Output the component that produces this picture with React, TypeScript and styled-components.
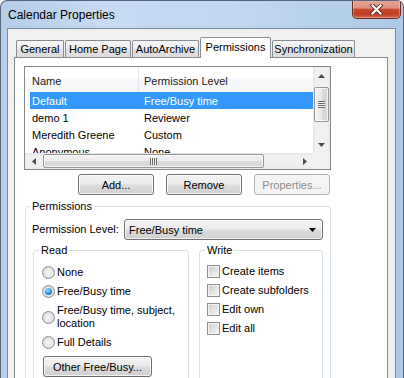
import React from 'react';
import styled, { createGlobalStyle } from 'styled-components';

const Global = createGlobalStyle`
  html, body { margin: 0; padding: 0; background: #ffffff; }
  body {
    font-family: "Liberation Sans", Arial, sans-serif;
    font-size: 11px;
    color: #000;
  }
  #root { width: 404px; height: 378px; overflow: hidden; }
  * { box-sizing: border-box; }
`;

const Window = styled.div`
  width: 404px;
  height: 378px;
  border: 1px solid #56677c;
  border-bottom: none;
  border-radius: 7px 7px 0 0;
  background: linear-gradient(90deg, #b4cde9 0%, #c6dbf1 25%, #c0d7ef 60%, #adc9e8 100%);
  display: flex;
  flex-direction: column;
  overflow: hidden;
`;

const TitleBar = styled.div`
  height: 27px;
  flex: none;
  display: flex;
  align-items: flex-start;
`;

const Title = styled.div`
  font-size: 12px;
  line-height: 14px;
  padding: 7px 0 0 7px;
  color: #000;
`;

const CloseButton = styled.div`
  width: 49px;
  height: 19px;
  margin: -1px 2px 0 auto;
  border: 1px solid #6e2a1f;
  border-top: none;
  border-radius: 0 0 5px 5px;
  background: linear-gradient(#eaa99b 0%, #dd8e7f 45%, #c8492f 52%, #c13c24 78%, #d56a4f 100%);
  box-shadow: inset 0 0 0 1px rgba(255, 255, 255, 0.3);
  display: flex;
  align-items: center;
  justify-content: center;
`;

const Body = styled.div`
  flex: 1;
  display: flex;
  flex-direction: column;
  margin: 0 7px 0 6px;
  border: 1px solid #7a8ca3;
  border-bottom: none;
  background: #f0f0f0;
  padding: 8px 7px 0 6px;
  min-height: 0;
`;

const TabStrip = styled.div`
  height: 20px;
  flex: none;
  display: flex;
  align-items: flex-end;
  gap: 1px;
  padding-left: 2px;
`;

const Tab = styled.div<{ $w: number; $active?: boolean }>`
  width: ${(p) => p.$w}px;
  height: ${(p) => (p.$active ? 21 : 17)}px;
  margin-bottom: ${(p) => (p.$active ? -1 : 0)}px;
  padding-bottom: ${(p) => (p.$active ? 2 : 0)}px;
  position: relative;
  z-index: ${(p) => (p.$active ? 2 : 1)};
  border: 1px solid #898c95;
  border-bottom: none;
  border-radius: 2px 2px 0 0;
  background: ${(p) =>
    p.$active ? '#ffffff' : 'linear-gradient(#f6f6f6 0%, #ececec 50%, #e2e2e2 51%, #dcdcdc 100%)'};
  display: flex;
  align-items: center;
  justify-content: center;
  white-space: nowrap;
  font-size: 11px;
`;

const Panel = styled.div`
  flex: 1;
  border: 1px solid #898c95;
  border-bottom: none;
  background: #ffffff;
  padding: 8px 56px 0 9px;
  display: flex;
  flex-direction: column;
  overflow: hidden;
  min-height: 0;
`;

const ListView = styled.div`
  width: 307px;
  height: 104px;
  flex: none;
  border: 1px solid #828790;
  background: #fff;
  display: grid;
  grid-template-columns: 1fr 17px;
  grid-template-rows: 1fr 16px;
`;

const ListContent = styled.div`
  overflow: hidden;
  display: flex;
  flex-direction: column;
`;

const HeaderRow = styled.div`
  height: 25px;
  flex: none;
  display: flex;
  background: linear-gradient(#ffffff 0%, #ffffff 45%, #f8f9fa 46%, #f4f5f7 100%);
`;

const HeaderCell = styled.div<{ $w?: number; $pad: number; $divider?: boolean }>`
  ${(p) => (p.$w ? `width: ${p.$w}px; flex: none;` : 'flex: 1;')}
  padding-left: ${(p) => p.$pad}px;
  display: flex;
  align-items: center;
  padding-top: 2px;
  border-right: ${(p) => (p.$divider ? '1px solid #e3e5e8' : 'none')};
  color: #1b1b1b;
`;

const Row = styled.div<{ $selected?: boolean }>`
  height: 17px;
  flex: none;
  margin-left: 5px;
  display: flex;
  align-items: center;
  background: ${(p) => (p.$selected ? '#3399ff' : 'transparent')};
  color: ${(p) => (p.$selected ? '#ffffff' : '#000000')};
  white-space: nowrap;
`;

const Cell = styled.div<{ $w?: number; $pad: number }>`
  ${(p) => (p.$w ? `width: ${p.$w}px; flex: none;` : 'flex: 1;')}
  padding-left: ${(p) => p.$pad}px;
`;

const VScroll = styled.div`
  display: flex;
  flex-direction: column;
  background: linear-gradient(90deg, #e4e4e4 0%, #f0f0f0 18%, #f0f0f0 82%, #e8e8e8 100%);
`;

const HScroll = styled.div`
  display: flex;
  align-items: stretch;
  background: linear-gradient(#e4e4e4 0%, #f0f0f0 18%, #f0f0f0 82%, #e8e8e8 100%);
`;

const ScrollBtn = styled.div<{ $horizontal?: boolean }>`
  flex: none;
  width: 17px;
  height: ${(p) => (p.$horizontal ? '16px' : '17px')};
  display: flex;
  align-items: center;
  justify-content: center;
`;

const Track = styled.div<{ $horizontal?: boolean }>`
  flex: 1;
  display: flex;
  flex-direction: ${(p) => (p.$horizontal ? 'row' : 'column')};
`;

const VThumb = styled.div`
  margin: 3px 1px 0 1px;
  height: 35px;
  border: 1px solid #979797;
  border-radius: 2px;
  background: linear-gradient(90deg, #f4f4f4 0%, #e9e9e9 50%, #dcdcdc 51%, #d6d6d6 100%);
  box-shadow: inset 0 0 0 1px rgba(255, 255, 255, 0.7);
  display: flex;
  align-items: center;
  justify-content: center;
`;

const HThumb = styled.div`
  margin: 1px 0 1px 1px;
  width: 221px;
  border: 1px solid #979797;
  border-radius: 2px;
  background: linear-gradient(#f4f4f4 0%, #e9e9e9 50%, #dcdcdc 51%, #d6d6d6 100%);
  box-shadow: inset 0 0 0 1px rgba(255, 255, 255, 0.7);
  display: flex;
  align-items: center;
  justify-content: center;
`;

const VGrip = styled.div`
  width: 7px;
  height: 7px;
  background: repeating-linear-gradient(#6a6a6a 0 1px, #f4f4f4 1px 2px, transparent 2px 2px);
`;

const HGrip = styled.div`
  width: 7px;
  height: 7px;
  background: repeating-linear-gradient(90deg, #6a6a6a 0 1px, #f4f4f4 1px 2px, transparent 2px 2px);
`;

const Corner = styled.div`
  background: #f0f0f0;
`;

const ButtonRow = styled.div`
  display: flex;
  justify-content: flex-end;
  gap: 12px;
  margin-top: 4px;
  padding-right: 1px;
  flex: none;
`;

const Button = styled.div<{ $w: number; $disabled?: boolean }>`
  width: ${(p) => p.$w}px;
  height: 21px;
  flex: none;
  border: 1px solid ${(p) => (p.$disabled ? '#adb2b5' : '#707070')};
  border-radius: 3px;
  background: ${(p) =>
    p.$disabled ? '#f4f4f4' : 'linear-gradient(#f3f3f3 0%, #ebebeb 48%, #dddddd 52%, #cfcfcf 100%)'};
  box-shadow: ${(p) => (p.$disabled ? 'none' : 'inset 0 0 0 1px rgba(255,255,255,0.75)')};
  color: ${(p) => (p.$disabled ? '#8b8b8b' : '#000000')};
  display: flex;
  align-items: center;
  justify-content: center;
  white-space: nowrap;
`;

const Group = styled.fieldset<{ $w: number; $h: number }>`
  width: ${(p) => p.$w}px;
  height: ${(p) => p.$h}px;
  flex: none;
  margin: 0;
  padding: 0;
  min-width: 0;
  border: 1px solid #d5dfe5;
  border-radius: 3px;
`;

const Legend = styled.legend<{ $offset: number }>`
  margin-left: ${(p) => p.$offset}px;
  padding: 0 2px;
  line-height: 13px;
  font-size: 11px;
`;

const PermGroupWrap = styled.div`
  margin: 5px 0 0 1px;
  flex: none;
`;

const GroupInner = styled.div<{ $pt: number; $pl: number; $gap?: number }>`
  padding: ${(p) => p.$pt}px 0 0 ${(p) => p.$pl}px;
  display: flex;
  flex-direction: column;
  gap: ${(p) => p.$gap ?? 0}px;
`;

const LevelRow = styled.div`
  display: flex;
  align-items: center;
`;

const LevelLabel = styled.div`
  width: 92px;
  line-height: 21px;
  flex: none;
  white-space: nowrap;
`;

const Combo = styled.div`
  width: 199px;
  height: 21px;
  border: 1px solid #707070;
  border-radius: 3px;
  background: linear-gradient(#f3f3f3 0%, #ebebeb 48%, #dddddd 52%, #cfcfcf 100%);
  box-shadow: inset 0 0 0 1px rgba(255, 255, 255, 0.75);
  display: flex;
  align-items: center;
  justify-content: space-between;
  padding: 0 6px 0 4px;
`;

const SubGroups = styled.div`
  display: flex;
  gap: 10px;
  margin-top: 4px;
  padding-left: 1px;
`;

const OptionRow = styled.div`
  display: flex;
  align-items: center;
  gap: 2px;
  line-height: 13px;
  white-space: nowrap;
`;

const Radio = styled.span<{ $checked?: boolean }>`
  width: 13px;
  height: 13px;
  flex: none;
  border-radius: 50%;
  border: 1px solid #8a8c8f;
  background: radial-gradient(circle at 50% 50%, #f8f8f8 0%, #e9e9e9 45%, #cfcfcf 100%);
  display: flex;
  align-items: center;
  justify-content: center;
  &::after {
    content: '';
    display: ${(p) => (p.$checked ? 'block' : 'none')};
    width: 7px;
    height: 7px;
    border-radius: 50%;
    background: radial-gradient(circle at 40% 35%, #a6e0ff 0%, #3c9be8 45%, #0d4f9a 100%);
  }
`;

const Check = styled.span`
  width: 13px;
  height: 13px;
  flex: none;
  border: 1px solid #8e8f8f;
  background: linear-gradient(135deg, #cdcdcd 0%, #e6e6e6 60%, #f6f6f6 100%);
  box-shadow: inset 0 0 0 1px #f4f4f4;
`;

const RadioColumn = styled.div`
  display: flex;
  flex-direction: column;
  gap: 6px;
`;

const OtherButtonWrap = styled.div`
  margin: 1px 0 0 1px;
`;

type Dir = 'up' | 'down' | 'left' | 'right';
const Arrow = ({ dir }: { dir: Dir }) => {
  const vertical = dir === 'up' || dir === 'down';
  const w = vertical ? 7 : 4;
  const h = vertical ? 4 : 7;
  const pts = {
    up: '0,4 3.5,0 7,4',
    down: '0,0 7,0 3.5,4',
    left: '4,0 4,7 0,3.5',
    right: '0,0 0,7 4,3.5',
  }[dir];
  return (
    <svg width={w} height={h} viewBox={`0 0 ${w} ${h}`}>
      <polygon points={pts} fill="#4a4a4a" />
    </svg>
  );
};

const CloseX = () => (
  <svg width="13" height="11" viewBox="0 0 13 11">
    <path d="M2.5 1.5 L10.5 9.5 M10.5 1.5 L2.5 9.5" stroke="#5b2a22" strokeWidth="4" strokeLinecap="square" />
    <path d="M2.5 1.5 L10.5 9.5 M10.5 1.5 L2.5 9.5" stroke="#ffffff" strokeWidth="2.2" strokeLinecap="square" />
  </svg>
);

const ComboArrow = () => (
  <svg width="7" height="4" viewBox="0 0 7 4">
    <polygon points="0,0 7,0 3.5,4" fill="#000" />
  </svg>
);

const tabs = [
  { label: 'General', w: 48 },
  { label: 'Home Page', w: 66 },
  { label: 'AutoArchive', w: 67 },
  { label: 'Permissions', w: 71, active: true },
  { label: 'Synchronization', w: 83 },
];

const rows = [
  { name: 'Default', level: 'Free/Busy time', selected: true },
  { name: 'demo 1', level: 'Reviewer' },
  { name: 'Meredith Greene', level: 'Custom' },
  { name: 'Anonymous', level: 'None' },
];

const readOptions: { label: React.ReactNode; checked?: boolean }[] = [
  { label: 'None' },
  { label: 'Free/Busy time', checked: true },
  {
    label: (
      <span>
        Free/Busy time, subject,
        <br />
        location
      </span>
    ),
  },
  { label: 'Full Details' },
];

const writeOptions = ['Create items', 'Create subfolders', 'Edit own', 'Edit all'];

export default function App() {
  return (
    <>
      <Global />
      <Window>
        <TitleBar>
          <Title>Calendar Properties</Title>
          <CloseButton>
            <CloseX />
          </CloseButton>
        </TitleBar>
        <Body>
          <TabStrip>
            {tabs.map((t) => (
              <Tab key={t.label} $w={t.w} $active={t.active}>
                {t.label}
              </Tab>
            ))}
          </TabStrip>
          <Panel>
            <ListView>
              <ListContent>
                <HeaderRow>
                  <HeaderCell $w={114} $pad={7} $divider>
                    Name
                  </HeaderCell>
                  <HeaderCell $pad={5}>Permission Level</HeaderCell>
                </HeaderRow>
                {rows.map((r) => (
                  <Row key={r.name} $selected={r.selected}>
                    <Cell $w={108} $pad={2}>
                      {r.name}
                    </Cell>
                    <Cell $pad={6}>{r.level}</Cell>
                  </Row>
                ))}
              </ListContent>
              <VScroll>
                <ScrollBtn>
                  <Arrow dir="up" />
                </ScrollBtn>
                <Track>
                  <VThumb>
                    <VGrip />
                  </VThumb>
                </Track>
                <ScrollBtn>
                  <Arrow dir="down" />
                </ScrollBtn>
              </VScroll>
              <HScroll>
                <ScrollBtn $horizontal>
                  <Arrow dir="left" />
                </ScrollBtn>
                <Track $horizontal>
                  <HThumb>
                    <HGrip />
                  </HThumb>
                </Track>
                <ScrollBtn $horizontal>
                  <Arrow dir="right" />
                </ScrollBtn>
              </HScroll>
              <Corner />
            </ListView>
            <ButtonRow>
              <Button $w={76}>Add...</Button>
              <Button $w={76}>Remove</Button>
              <Button $w={76} $disabled>
                Properties...
              </Button>
            </ButtonRow>
            <PermGroupWrap>
              <Group $w={306} $h={220}>
                <Legend $offset={4}>Permissions</Legend>
                <GroupInner $pt={6} $pl={6}>
                  <LevelRow>
                    <LevelLabel>Permission Level:</LevelLabel>
                    <Combo>
                      <span>Free/Busy time</span>
                      <ComboArrow />
                    </Combo>
                  </LevelRow>
                  <SubGroups>
                    <Group $w={156} $h={160}>
                      <Legend $offset={5}>Read</Legend>
                      <GroupInner $pt={9} $pl={8}>
                        <RadioColumn>
                          {readOptions.map((o, i) => (
                            <OptionRow key={i}>
                              <Radio $checked={o.checked} />
                              {o.label}
                            </OptionRow>
                          ))}
                          <OtherButtonWrap>
                            <Button $w={109}>Other Free/Busy...</Button>
                          </OtherButtonWrap>
                        </RadioColumn>
                      </GroupInner>
                    </Group>
                    <Group $w={124} $h={160}>
                      <Legend $offset={5}>Write</Legend>
                      <GroupInner $pt={8} $pl={7} $gap={6}>
                        {writeOptions.map((w) => (
                          <OptionRow key={w}>
                            <Check />
                            {w}
                          </OptionRow>
                        ))}
                      </GroupInner>
                    </Group>
                  </SubGroups>
                </GroupInner>
              </Group>
            </PermGroupWrap>
          </Panel>
        </Body>
      </Window>
    </>
  );
}
